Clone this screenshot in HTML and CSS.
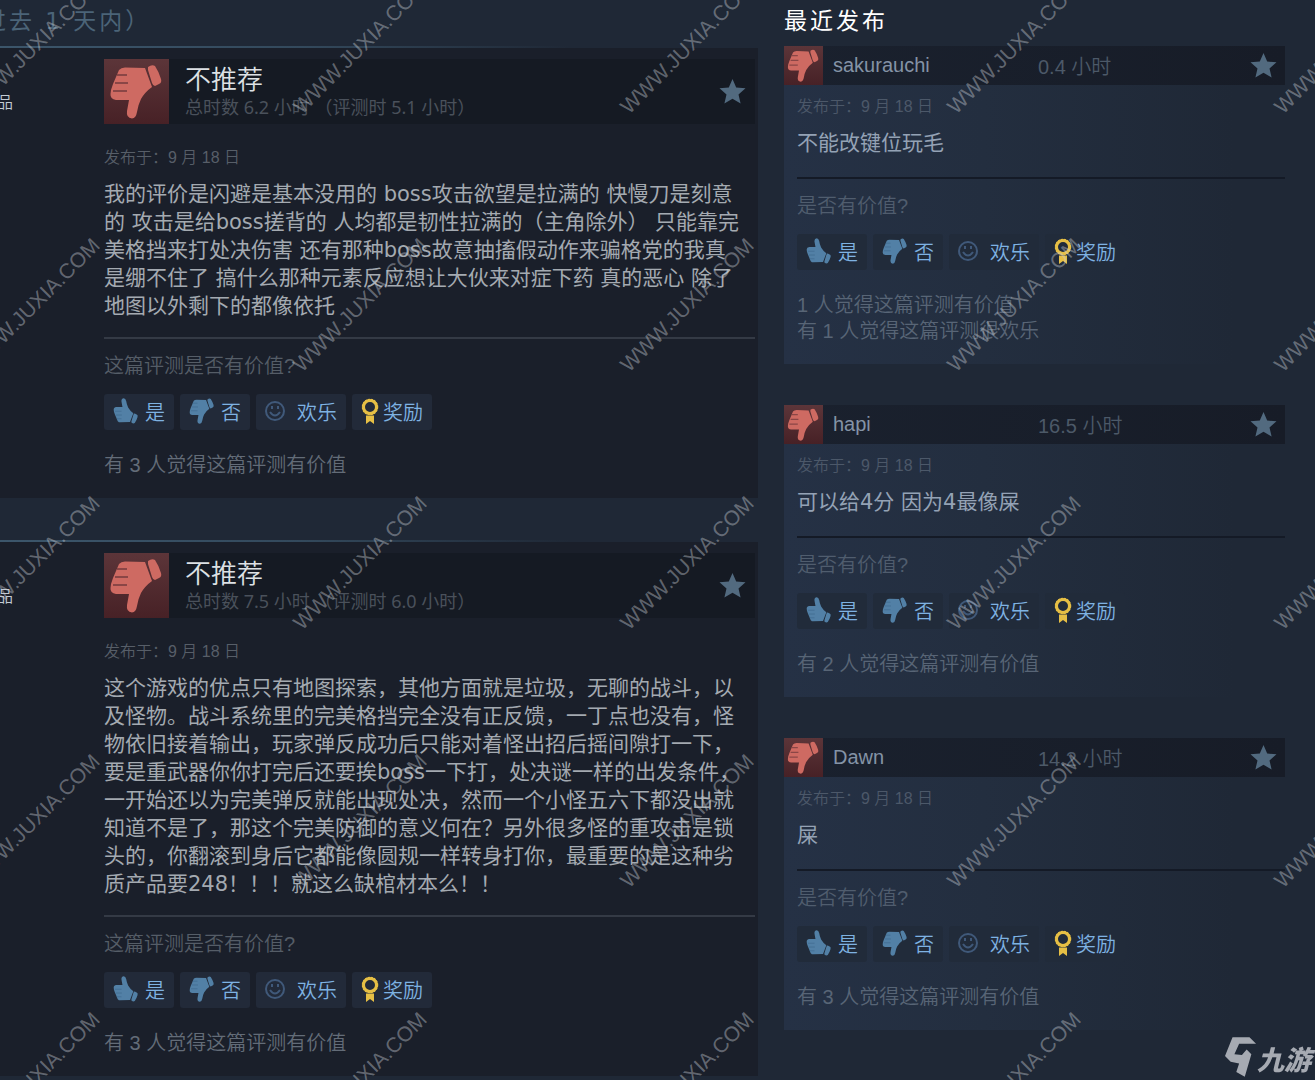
FILE: index.html
```html
<!DOCTYPE html>
<html lang="zh-CN">
<head>
    <meta charset="UTF-8">
    <meta name="viewport" content="width=device-width, initial-scale=1.0">
    <title>评测</title>
    <link rel="stylesheet" href="styles.css">
</head>
<body>
    <svg class="defs" aria-hidden="true">
        <symbol id="thumb" viewBox="5 5 55 55">
            <path d="M15 11Q17 8.500 21 8.500L41 9L48 28Q41 33 37 40Q34 46 33 53Q32 59 28 59.500Q22 59 23 52L25 41L12 41Q6 40 6.500 35L7 31L9 25L12 18Z"/>
            <path d="M44 8Q48 5 51 7Q55 13 57 20Q58 24 55 25L51 27Q49 27 48 24L44 11Z"/>
            <path class="slit" d="M13 16H23M11 24H24M9 32H23"/>
        </symbol>
        <symbol id="star" viewBox="0 0 27 27">
            <path d="M13.500 1l3.700 8.500 9.300.8-7 6.100 2.100 9.200-8.100-4.800-8.100 4.800 2.100-9.200-7-6.100 9.300-.8z"/>
        </symbol>
        <symbol id="smile" viewBox="0 0 20 20">
            <circle cx="10" cy="10" r="9" fill="none" stroke="currentColor" stroke-width="2"/>
            <path d="M5 11Q10 18 15 11" fill="none" stroke="currentColor" stroke-width="2"/>
            <path d="M6 5h2v3H6zM12 5h2v3h-2z"/>
        </symbol>
        <symbol id="award" viewBox="0 0 18 26">
            <circle cx="9" cy="9" r="6.500" fill="none" stroke="currentColor" stroke-width="3"/>
            <circle cx="9" cy="9" r="7.500" fill="none" stroke="currentColor" stroke-width="1.500" stroke-dasharray="2 1"/>
            <path d="M5 17.500h8V26l-4-3-4 3z"/>
        </symbol>
    </svg>

    <div class="page">
        <main class="main">
            <h2 class="main-title">过去 1 天内）</h2>

            <article class="review">
                <div class="author">品</div>
                <div class="content">
                    <header class="review-head">
                        <span class="verdict"><svg><use href="#thumb"/></svg></span>
                        <div class="head-text">
                            <h3>不推荐</h3>
                            <p>总时数 6.2 小时 （评测时 5.1 小时）</p>
                        </div>
                        <svg class="star"><use href="#star"/></svg>
                    </header>
                    <div class="date">发布于：9 月 18 日</div>
                    <p class="text">我的评价是闪避是基本没用的 boss攻击欲望是拉满的 快慢刀是刻意的 攻击是给boss搓背的 人均都是韧性拉满的（主角除外） 只能靠完美格挡来打处决伤害 还有那种boss故意抽搐假动作来骗格党的我真是绷不住了 搞什么那种元素反应想让大伙来对症下药 真的恶心 除了地图以外剩下的都像依托</p>
                    <div class="vote">
                        <p class="question">这篇评测是否有价值?</p>
                        <div class="buttons">
                            <button type="button"><svg class="up"><use href="#thumb"/></svg>是</button>
                            <button type="button"><svg class="down"><use href="#thumb"/></svg>否</button>
                            <button type="button"><svg class="smile"><use href="#smile"/></svg>欢乐</button>
                            <button type="button"><svg class="award"><use href="#award"/></svg>奖励</button>
                        </div>
                        <p class="helpful">有 3 人觉得这篇评测有价值</p>
                    </div>
                </div>
            </article>

            <article class="review">
                <div class="author">品</div>
                <div class="content">
                    <header class="review-head">
                        <span class="verdict"><svg><use href="#thumb"/></svg></span>
                        <div class="head-text">
                            <h3>不推荐</h3>
                            <p>总时数 7.5 小时 （评测时 6.0 小时）</p>
                        </div>
                        <svg class="star"><use href="#star"/></svg>
                    </header>
                    <div class="date">发布于：9 月 18 日</div>
                    <p class="text">这个游戏的优点只有地图探索，其他方面就是垃圾，无聊的战斗，以及怪物。战斗系统里的完美格挡完全没有正反馈，一丁点也没有，怪物依旧接着输出，玩家弹反成功后只能对着怪出招后摇间隙打一下，要是重武器你你打完后还要挨boss一下打，处决谜一样的出发条件，一开始还以为完美弹反就能出现处决，然而一个小怪五六下都没出就知道不是了，那这个完美防御的意义何在？另外很多怪的重攻击是锁头的，你翻滚到身后它都能像圆规一样转身打你，最重要的是这种劣质产品要248！！！就这么缺棺材本么！！</p>
                    <div class="vote">
                        <p class="question">这篇评测是否有价值?</p>
                        <div class="buttons">
                            <button type="button"><svg class="up"><use href="#thumb"/></svg>是</button>
                            <button type="button"><svg class="down"><use href="#thumb"/></svg>否</button>
                            <button type="button"><svg class="smile"><use href="#smile"/></svg>欢乐</button>
                            <button type="button"><svg class="award"><use href="#award"/></svg>奖励</button>
                        </div>
                        <p class="helpful">有 3 人觉得这篇评测有价值</p>
                    </div>
                </div>
            </article>
        </main>

        <aside class="recent">
            <h2 class="recent-title">最近发布</h2>

            <article class="card">
                <header class="card-head">
                    <span class="verdict"><svg><use href="#thumb"/></svg></span>
                    <span class="name">sakurauchi</span>
                    <span class="hours">0.4 小时</span>
                    <svg class="star"><use href="#star"/></svg>
                </header>
                <div class="card-body">
                    <div class="date">发布于：9 月 18 日</div>
                    <p class="text">不能改键位玩毛</p>
                    <div class="vote">
                        <p class="question">是否有价值?</p>
                        <div class="buttons">
                            <button type="button"><svg class="up"><use href="#thumb"/></svg>是</button>
                            <button type="button"><svg class="down"><use href="#thumb"/></svg>否</button>
                            <button type="button"><svg class="smile"><use href="#smile"/></svg>欢乐</button>
                            <button type="button"><svg class="award"><use href="#award"/></svg>奖励</button>
                        </div>
                        <p class="helpful">1 人觉得这篇评测有价值<br>有 1 人觉得这篇评测很欢乐</p>
                    </div>
                </div>
            </article>

            <article class="card">
                <header class="card-head">
                    <span class="verdict"><svg><use href="#thumb"/></svg></span>
                    <span class="name">hapi</span>
                    <span class="hours">16.5 小时</span>
                    <svg class="star"><use href="#star"/></svg>
                </header>
                <div class="card-body">
                    <div class="date">发布于：9 月 18 日</div>
                    <p class="text">可以给4分 因为4最像屎</p>
                    <div class="vote">
                        <p class="question">是否有价值?</p>
                        <div class="buttons">
                            <button type="button"><svg class="up"><use href="#thumb"/></svg>是</button>
                            <button type="button"><svg class="down"><use href="#thumb"/></svg>否</button>
                            <button type="button"><svg class="smile"><use href="#smile"/></svg>欢乐</button>
                            <button type="button"><svg class="award"><use href="#award"/></svg>奖励</button>
                        </div>
                        <p class="helpful">有 2 人觉得这篇评测有价值</p>
                    </div>
                </div>
            </article>

            <article class="card">
                <header class="card-head">
                    <span class="verdict"><svg><use href="#thumb"/></svg></span>
                    <span class="name">Dawn</span>
                    <span class="hours">14.2 小时</span>
                    <svg class="star"><use href="#star"/></svg>
                </header>
                <div class="card-body">
                    <div class="date">发布于：9 月 18 日</div>
                    <p class="text">屎</p>
                    <div class="vote">
                        <p class="question">是否有价值?</p>
                        <div class="buttons">
                            <button type="button"><svg class="up"><use href="#thumb"/></svg>是</button>
                            <button type="button"><svg class="down"><use href="#thumb"/></svg>否</button>
                            <button type="button"><svg class="smile"><use href="#smile"/></svg>欢乐</button>
                            <button type="button"><svg class="award"><use href="#award"/></svg>奖励</button>
                        </div>
                        <p class="helpful">有 3 人觉得这篇评测有价值</p>
                    </div>
                </div>
            </article>
        </aside>
    </div>

    <svg class="watermark" id="watermark" aria-hidden="true"></svg>

    <div class="logo">
        <svg viewBox="0 0 34 44"><path d="M8 1H26L33 8H15L10 19L18 20L23 14L28 19L21 43L12 38L15 29L6 27L0 21Z"/></svg>
        <span>九游</span>
    </div>

    <script>
        const watermark = document.getElementById('watermark');
        const stepX = 327;
        const stepY = 258;

        // repeat the slanted mark over the whole window
        for (let y = 115; y < window.innerHeight + stepY; y += stepY) {
            for (let x = -25; x < window.innerWidth; x += stepX) {
                const mark = document.createElementNS('http://www.w3.org/2000/svg', 'text');
                mark.setAttribute('transform', `translate(${x} ${y}) rotate(-45)`);
                mark.textContent = 'WWW.JUXIA.COM';
                watermark.appendChild(mark);
            }
        }
    </script>
</body>
</html>
```
FILE: styles.css
```css
* {
    box-sizing: border-box;
}
body {
    margin: 0;
    background: #1f2836;
    color: #a4aab1;
    font-family: "Liberation Sans", "Noto Sans CJK SC", sans-serif;
    font-weight: 350;
    min-height: 100vh;
    position: relative;
}
h2, h3, p {
    margin: 0;
    font-weight: inherit;
}
svg {
    display: block;
    flex: none;
    fill: currentColor;
}
.defs {
    position: absolute;
    width: 0;
    height: 0;
}
.page {
    display: grid;
    grid-template-columns: minmax(0, 1fr) 501px;
    column-gap: 26px;
    padding-right: 30px;
}
.main-title, .recent-title {
    font-family: "DejaVu Sans", "Noto Sans CJK SC", sans-serif;
    font-size: 23px;
    line-height: 42px;
    height: 46px;
    font-weight: 400;
    letter-spacing: 3px;
    white-space: nowrap;
}
.main-title {
    margin-left: -17px;
    color: #4b6478;
}
.recent-title {
    color: #fff;
}

/* left column */
.review {
    display: grid;
    grid-template-columns: 104px minmax(0, 1fr);
    padding: 11px 3px 20px 0;
    margin-bottom: 42px;
    background: #1a1f2a;
    border-top: 2px solid;
    border-image: linear-gradient(to right, #3c566b, #33495c 40%, #1f2836 75%) 1;
}
.review:last-child {
    margin-bottom: 0;
}
.author {
    margin-left: -3px;
    padding-top: 32px;
    font-size: 16px;
    line-height: 24px;
    color: #c3cbd3;
}
.review-head {
    display: flex;
    align-items: center;
    height: 65px;
    margin-bottom: 22px;
    padding-right: 9px;
    background: #151a23;
}
.verdict {
    --slit: #8a4646;
    display: flex;
    align-items: center;
    justify-content: center;
    flex: none;
    width: 65px;
    height: 65px;
    color: #ce6a62;
    background: linear-gradient(#5c3539, #472126);
}
.verdict svg {
    width: 55px;
    height: 55px;
}
.slit {
    fill: none;
    stroke: var(--slit);
    stroke-width: 2;
}
.head-text {
    flex: 1;
    padding-left: 16px;
}
.head-text h3 {
    font-size: 26px;
    line-height: 30px;
    color: #dde1e5;
}
.head-text p {
    font-family: "Noto Sans", "Noto Sans CJK SC", sans-serif;
    font-size: 18px;
    line-height: 24px;
    font-weight: 400;
    color: #4a515b;
}
.star {
    width: 27px;
    height: 27px;
    color: #526a7f;
}
.date {
    font-size: 16px;
    line-height: 24px;
    color: #575e68;
}
.text {
    margin-top: 10px;
    font-family: "DejaVu Sans", "Noto Sans CJK SC", sans-serif;
    font-size: 21px;
    line-height: 28px;
    font-weight: 400;
}
.review .text {
    padding-right: 12px;
}
.vote {
    margin-top: 17px;
    padding-top: 14px;
    border-top: 2px solid #343a45;
}
.question, .helpful {
    font-size: 20px;
    line-height: 26px;
    color: #555d67;
}
.helpful {
    margin-top: 22px;
    color: #636c78;
}
.buttons {
    display: flex;
    gap: 6px;
    margin-top: 15px;
}
button {
    --slit: #456f94;
    display: flex;
    align-items: center;
    height: 36px;
    padding: 0 9px 2px;
    border: none;
    border-radius: 3px;
    background: #222a39;
    color: #7eb2e2;
    font: inherit;
    font-size: 20px;
    cursor: pointer;
}
button .up, button .down {
    width: 26px;
    height: 26px;
    margin-right: 6px;
    color: #5280a6;
}
button .up {
    transform: scaleY(-1);
}
button .smile {
    width: 20px;
    height: 20px;
    margin-right: 12px;
    color: #40597a;
}
button .award {
    width: 18px;
    height: 26px;
    margin-right: 4px;
    color: #e6bf45;
}

/* right column */
.card {
    margin-bottom: 41px;
    background: linear-gradient(to right, #253145, #232e3f 40%, #1f2836 90%);
}
.card:last-child {
    margin-bottom: 0;
}
.card-head {
    display: grid;
    grid-template-columns: 39px 1fr 212px 26px;
    align-items: center;
    height: 39px;
    padding-right: 9px;
    background: linear-gradient(to right, #1a212e, #171c27);
    font-size: 20px;
}
.card-head .verdict {
    width: 39px;
    height: 39px;
}
.card-head .verdict svg {
    width: 33px;
    height: 33px;
}
.card-head .name {
    padding-left: 10px;
    color: #8493a6;
}
.card-head .hours {
    color: #4c5968;
}
.card-body {
    padding: 10px 0 20px 13px;
}
.card .date {
    color: #4c5869;
}
.card .text {
    color: #94a2b5;
}
.card .vote {
    margin-top: 20px;
    border-top-color: #141a26;
}
.card .question {
    color: #505d6e;
}
.card .helpful {
    color: #586576;
}
.card button {
    background: #212b3a;
}

.watermark {
    position: absolute;
    top: 0;
    left: 0;
    width: 100%;
    height: 100%;
    pointer-events: none;
    fill: rgba(200, 205, 212, 0.42);
    font-family: "Liberation Sans", sans-serif;
    font-size: 21px;
    font-weight: 400;
}
.logo {
    position: fixed;
    right: 4px;
    bottom: 1px;
    display: flex;
    align-items: flex-end;
    color: #a6aab2;
}
.logo svg {
    width: 32px;
    height: 44px;
}
.logo span {
    font-size: 27px;
    line-height: 36px;
    font-weight: 900;
    font-style: italic;
}
```
